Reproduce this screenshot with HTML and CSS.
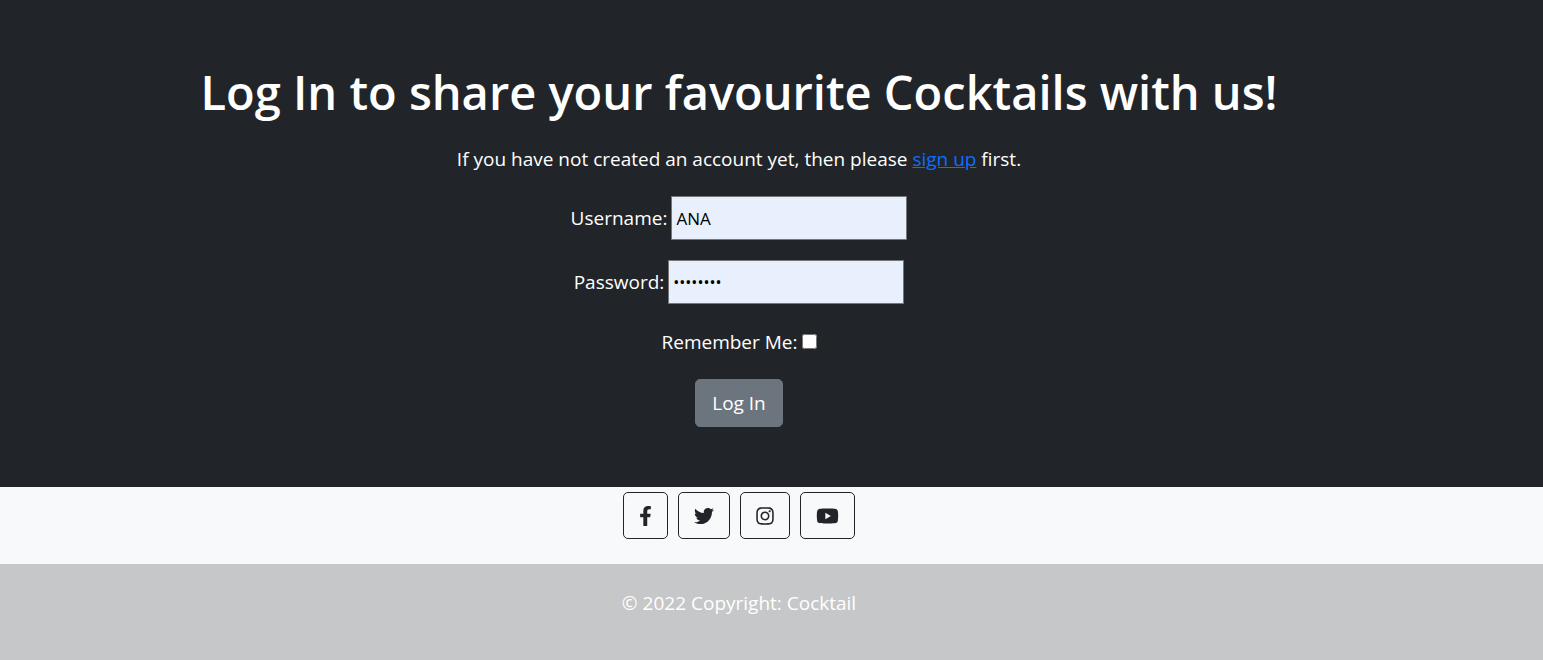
FILE: index.html
```html
<!DOCTYPE html>
<html lang="en">
<head>
<meta charset="utf-8">
<meta name="viewport" content="width=device-width, initial-scale=1">
<title>Log In</title>
<link rel="stylesheet" href="styles.css">
</head>
<body>
<main class="login">
  <h1 class="title">Log In to share your favourite Cocktails with us!</h1>
  <p class="intro">If you have not created an account yet, then please <a class="link" href="#">sign up</a> first.</p>
  <form class="form">
    <div class="field">
      <label for="username">Username:</label>
      <input class="text-input" id="username" type="text" value="ANA">
    </div>
    <div class="field">
      <label for="password">Password:</label>
      <input class="text-input password" id="password" type="password" value="cocktail">
    </div>
    <div class="field remember">
      <label for="remember">Remember Me:</label>
      <input class="check" id="remember" type="checkbox">
    </div>
    <button class="submit" type="submit">Log In</button>
  </form>
</main>
<footer class="footer">
  <nav class="social" aria-label="Social media">
    <a class="social-link" href="#" aria-label="Facebook"><svg class="icon facebook" viewBox="0 0 320 512"><path d="M279.14 288l14.22-92.66h-88.91v-60.13c0-25.35 12.42-50.06 52.24-50.06h40.42V6.26S260.43 0 225.36 0c-73.22 0-121.08 44.38-121.08 124.72v70.62H22.89V288h81.39v224h100.17V288z"/></svg></a>
    <a class="social-link" href="#" aria-label="Twitter"><svg class="icon" viewBox="0 0 512 512"><path d="M459.37 151.716c.325 4.548.325 9.097.325 13.645 0 138.72-105.583 298.558-298.558 298.558-59.452 0-114.68-17.219-161.137-47.106 8.447.974 16.568 1.299 25.34 1.299 49.055 0 94.213-16.568 130.274-44.832-46.132-.975-84.792-31.188-98.112-72.772 6.498.974 12.995 1.624 19.818 1.624 9.421 0 18.843-1.3 27.614-3.573-48.081-9.747-84.143-51.98-84.143-102.985v-1.299c13.969 7.797 30.214 12.67 47.431 13.319-28.264-18.843-46.781-51.005-46.781-87.391 0-19.492 5.197-37.36 14.294-52.954 51.655 63.675 129.3 105.258 216.365 109.807-1.624-7.797-2.599-15.918-2.599-24.04 0-57.828 46.782-104.934 104.934-104.934 30.213 0 57.502 12.67 76.67 33.137 23.715-4.548 46.456-13.32 66.599-25.34-7.798 24.366-24.366 44.833-46.132 57.827 21.117-2.273 41.584-8.122 60.426-16.243-14.292 20.791-32.161 39.308-52.628 54.253z"/></svg></a>
    <a class="social-link" href="#" aria-label="Instagram"><svg class="icon instagram" viewBox="0 0 448 512"><path d="M224.1 141c-63.6 0-114.9 51.3-114.9 114.9s51.3 114.9 114.9 114.9S339 319.5 339 255.9 287.7 141 224.1 141zm0 189.6c-41.1 0-74.7-33.5-74.7-74.7s33.5-74.7 74.7-74.7 74.7 33.5 74.7 74.7-33.6 74.7-74.7 74.7zm146.4-194.3c0 14.9-12 26.8-26.8 26.8-14.9 0-26.8-12-26.8-26.8s12-26.8 26.8-26.8 26.8 12 26.8 26.8zm76.1 27.2c-1.7-35.9-9.9-67.7-36.2-93.9-26.2-26.2-58-34.4-93.9-36.2-37-2.1-147.9-2.1-184.9 0-35.8 1.7-67.6 9.9-93.9 36.1s-34.4 58-36.2 93.9c-2.1 37-2.1 147.9 0 184.9 1.7 35.9 9.9 67.7 36.2 93.9s58 34.4 93.9 36.2c37 2.1 147.9 2.1 184.9 0 35.9-1.7 67.7-9.9 93.9-36.2 26.2-26.2 34.4-58 36.2-93.9 2.1-37 2.1-147.8 0-184.8zM398.8 388c-7.8 19.6-22.9 34.7-42.6 42.6-29.5 11.7-99.5 9-132.1 9s-102.7 2.6-132.1-9c-19.6-7.8-34.7-22.9-42.6-42.6-11.7-29.5-9-99.5-9-132.1s-2.6-102.7 9-132.1c7.8-19.6 22.9-34.7 42.6-42.6 29.5-11.7 99.5-9 132.1-9s102.7-2.6 132.1 9c19.6 7.8 34.7 22.9 42.6 42.6 11.7 29.5 9 99.5 9 132.1s2.7 102.7-9 132.1z"/></svg></a>
    <a class="social-link" href="#" aria-label="YouTube"><svg class="icon youtube" viewBox="0 0 576 512"><path d="M549.655 124.083c-6.281-23.65-24.787-42.276-48.284-48.597C458.781 64 288 64 288 64S117.22 64 74.629 75.486c-23.497 6.322-42.003 24.947-48.284 48.597-11.412 42.867-11.412 132.305-11.412 132.305s0 89.438 11.412 132.305c6.281 23.65 24.787 41.5 48.284 47.821C117.22 448 288 448 288 448s170.78 0 213.371-11.486c23.497-6.321 42.003-24.171 48.284-47.821 11.412-42.867 11.412-132.305 11.412-132.305s0-89.438-11.412-132.305zm-317.51 213.508V175.185l142.739 81.205-142.739 81.201z"/></svg></a>
  </nav>
  <div class="copyright">© 2022 Copyright: Cocktail</div>
</footer>
</body>
</html>
```
FILE: styles.css
```css
* {
  box-sizing: border-box;
}

body {
  margin: 0;
  min-height: 100vh;
  display: flex;
  flex-direction: column;
  font: 19px/30px "Segoe UI", "Open Sans", sans-serif;
  color: #fff;
  background: #212529;
}

.login {
  padding: 62px 65px 60px 0;
  text-align: center;
}

.title {
  margin: 0 0 22px;
  font-size: 47px;
  line-height: 60px;
  font-weight: 600;
}

.intro {
  margin: 0 0 22px;
}

.link {
  color: #0d6efd;
}

.form {
  display: flex;
  flex-direction: column;
  align-items: center;
  gap: 20px;
}

.field {
  display: flex;
  align-items: center;
  gap: 4px;
}

.text-input {
  width: 236px;
  height: 44px;
  padding: 1px 4px;
  border: 1px solid #767676;
  border-radius: 0;
  background: #e8f0fe;
  color: #000;
  font: 17px "Segoe UI", "Open Sans", sans-serif;
}

.password {
  font-size: 16px;
}

.remember {
  padding: 3px 0 2px;
}

.check {
  width: 15px;
  height: 15px;
  margin: 0 0 2px;
}

.submit {
  padding: 8px 16px;
  border: 1px solid #6c757d;
  border-radius: 5px;
  background: #6c757d;
  color: #fff;
  font: inherit;
}

.footer {
  flex: 1;
  display: flex;
  flex-direction: column;
  background: #f8f9fa;
}

.social {
  display: flex;
  justify-content: center;
  gap: 10px;
  padding: 5px 65px 25px 0;
}

.social-link {
  display: flex;
  align-items: center;
  height: 47px;
  padding: 0 15px;
  border: 1px solid #212529;
  border-radius: 5px;
  color: #212529;
}

.icon {
  display: block;
  width: 20px;
  height: 20px;
  fill: currentColor;
}

.facebook {
  width: 13px;
}

.instagram {
  width: 18px;
}

.youtube {
  width: 23px;
}

.copyright {
  flex: 1;
  padding: 24px 65px 42px 0;
  text-align: center;
  background: #c6c7c8;
}
```
